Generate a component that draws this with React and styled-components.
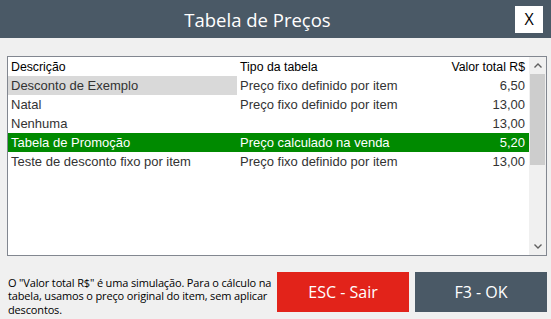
import React from "react";
import styled, { createGlobalStyle } from "styled-components";

const Global = createGlobalStyle`
  html, body { margin: 0; padding: 0; background: #f0f0f0; }
  body { width: 551px; height: 319px; overflow: hidden; }
  * { box-sizing: border-box; }
`;

const Page = styled.div`
  width: 551px;
  height: 319px;
  display: flex;
  flex-direction: column;
  background: #f0f0f0;
  font-family: "Open Sans", "Noto Sans", sans-serif;
`;

const TitleBar = styled.div`
  height: 38px;
  background: #4a5966;
  display: flex;
  align-items: center;
  padding-right: 8px;
`;

const Title = styled.div`
  flex: 1;
  text-align: center;
  color: #ffffff;
  font-size: 18.5px;
  line-height: 38px;
  padding-top: 1px;
`;

const CloseButton = styled.button`
  width: 28px;
  height: 27px;
  border: none;
  background: #ffffff;
  color: #000000;
  font-family: "Open Sans", sans-serif;
  font-size: 16px;
  padding: 0;
  display: flex;
  align-items: center;
  justify-content: center;
`;

const Content = styled.div`
  flex: 1;
  display: flex;
  flex-direction: column;
  padding: 18px 4px 0 7px;
`;

const ListBox = styled.div`
  height: 200px;
  border: 1px solid #828790;
  background: #ffffff;
  display: flex;
`;

const Table = styled.div`
  flex: 1;
  display: flex;
  flex-direction: column;
  font-family: "Liberation Sans", Arial, sans-serif;
`;

const Row = styled.div`
  display: grid;
  grid-template-columns: 229px 1fr 120px;
  height: 19px;
  align-items: center;
  font-size: ${(p) => (p.$header ? "12.3px" : "13px")};
  color: ${(p) => (p.$selected ? "#ffffff" : p.$header ? "#000000" : "#333333")};
  background: ${(p) => (p.$selected ? "#008a00" : "transparent")};
`;

const Cell = styled.div`
  height: 100%;
  display: flex;
  align-items: center;
  justify-content: ${(p) => (p.$right ? "flex-end" : "flex-start")};
  padding: ${(p) => (p.$right ? "0 4px 0 0" : "0 0 0 3px")};
  background: ${(p) => (p.$focus ? "#d9d9d9" : "transparent")};
  white-space: nowrap;
`;

const ScrollBar = styled.div`
  width: 17px;
  background: #f0f0f0;
  display: flex;
  flex-direction: column;
`;

const ScrollArrow = styled.div`
  height: 17px;
  display: flex;
  align-items: center;
  justify-content: center;
`;

const ScrollTrack = styled.div`
  flex: 1;
  display: flex;
  flex-direction: column;
  padding: 0 1px;
`;

const Thumb = styled.div`
  height: 91px;
  background: #cdcdcd;
`;

const Bottom = styled.div`
  display: flex;
  margin-top: 16px;
  align-items: flex-start;
`;

const Note = styled.div`
  width: 270px;
  padding: 4px 0 0 1px;
  font-size: 11px;
  line-height: 13.4px;
  color: #000000;
  letter-spacing: -0.15px;
`;

const Buttons = styled.div`
  display: flex;
  gap: 6px;
  margin-left: auto;
`;

const ActionButton = styled.button`
  width: 132px;
  height: 40px;
  border: none;
  background: ${(p) => p.$bg};
  color: #ffffff;
  font-family: "Open Sans", "Noto Sans", sans-serif;
  font-size: 16px;
  padding: 0;
`;

const Chevron = ({ up }) => (
  <svg width="8" height="5" viewBox="0 0 8 5">
    <polyline
      points={up ? "0.5,4.5 4,1 7.5,4.5" : "0.5,0.5 4,4 7.5,0.5"}
      fill="none"
      stroke="#606060"
      strokeWidth="1.4"
    />
  </svg>
);

const rows = [
  { d: "Desconto de Exemplo", t: "Preço fixo definido por item", v: "6,50", focus: true },
  { d: "Natal", t: "Preço fixo definido por item", v: "13,00" },
  { d: "Nenhuma", t: "", v: "13,00" },
  { d: "Tabela de Promoção", t: "Preço calculado na venda", v: "5,20", selected: true },
  { d: "Teste de desconto fixo por item", t: "Preço fixo definido por item", v: "13,00" },
];

export default function App() {
  return (
    <>
      <Global />
      <Page>
        <TitleBar>
          <Title>Tabela de Preços</Title>
          <CloseButton>X</CloseButton>
        </TitleBar>
        <Content>
          <ListBox>
            <Table>
              <Row $header>
                <Cell>Descrição</Cell>
                <Cell>Tipo da tabela</Cell>
                <Cell $right>Valor total R$</Cell>
              </Row>
              {rows.map((r) => (
                <Row key={r.d} $selected={r.selected}>
                  <Cell $focus={r.focus}>{r.d}</Cell>
                  <Cell>{r.t}</Cell>
                  <Cell $right>{r.v}</Cell>
                </Row>
              ))}
            </Table>
            <ScrollBar>
              <ScrollArrow>
                <Chevron up />
              </ScrollArrow>
              <ScrollTrack>
                <Thumb />
              </ScrollTrack>
              <ScrollArrow>
                <Chevron />
              </ScrollArrow>
            </ScrollBar>
          </ListBox>
          <Bottom>
            <Note>
              O "Valor total R$" é uma simulação. Para o cálculo na tabela, usamos o preço original do item, sem aplicar descontos.
            </Note>
            <Buttons>
              <ActionButton $bg="#e2231a">ESC - Sair</ActionButton>
              <ActionButton $bg="#4a5966">F3 - OK</ActionButton>
            </Buttons>
          </Bottom>
        </Content>
      </Page>
    </>
  );
}
